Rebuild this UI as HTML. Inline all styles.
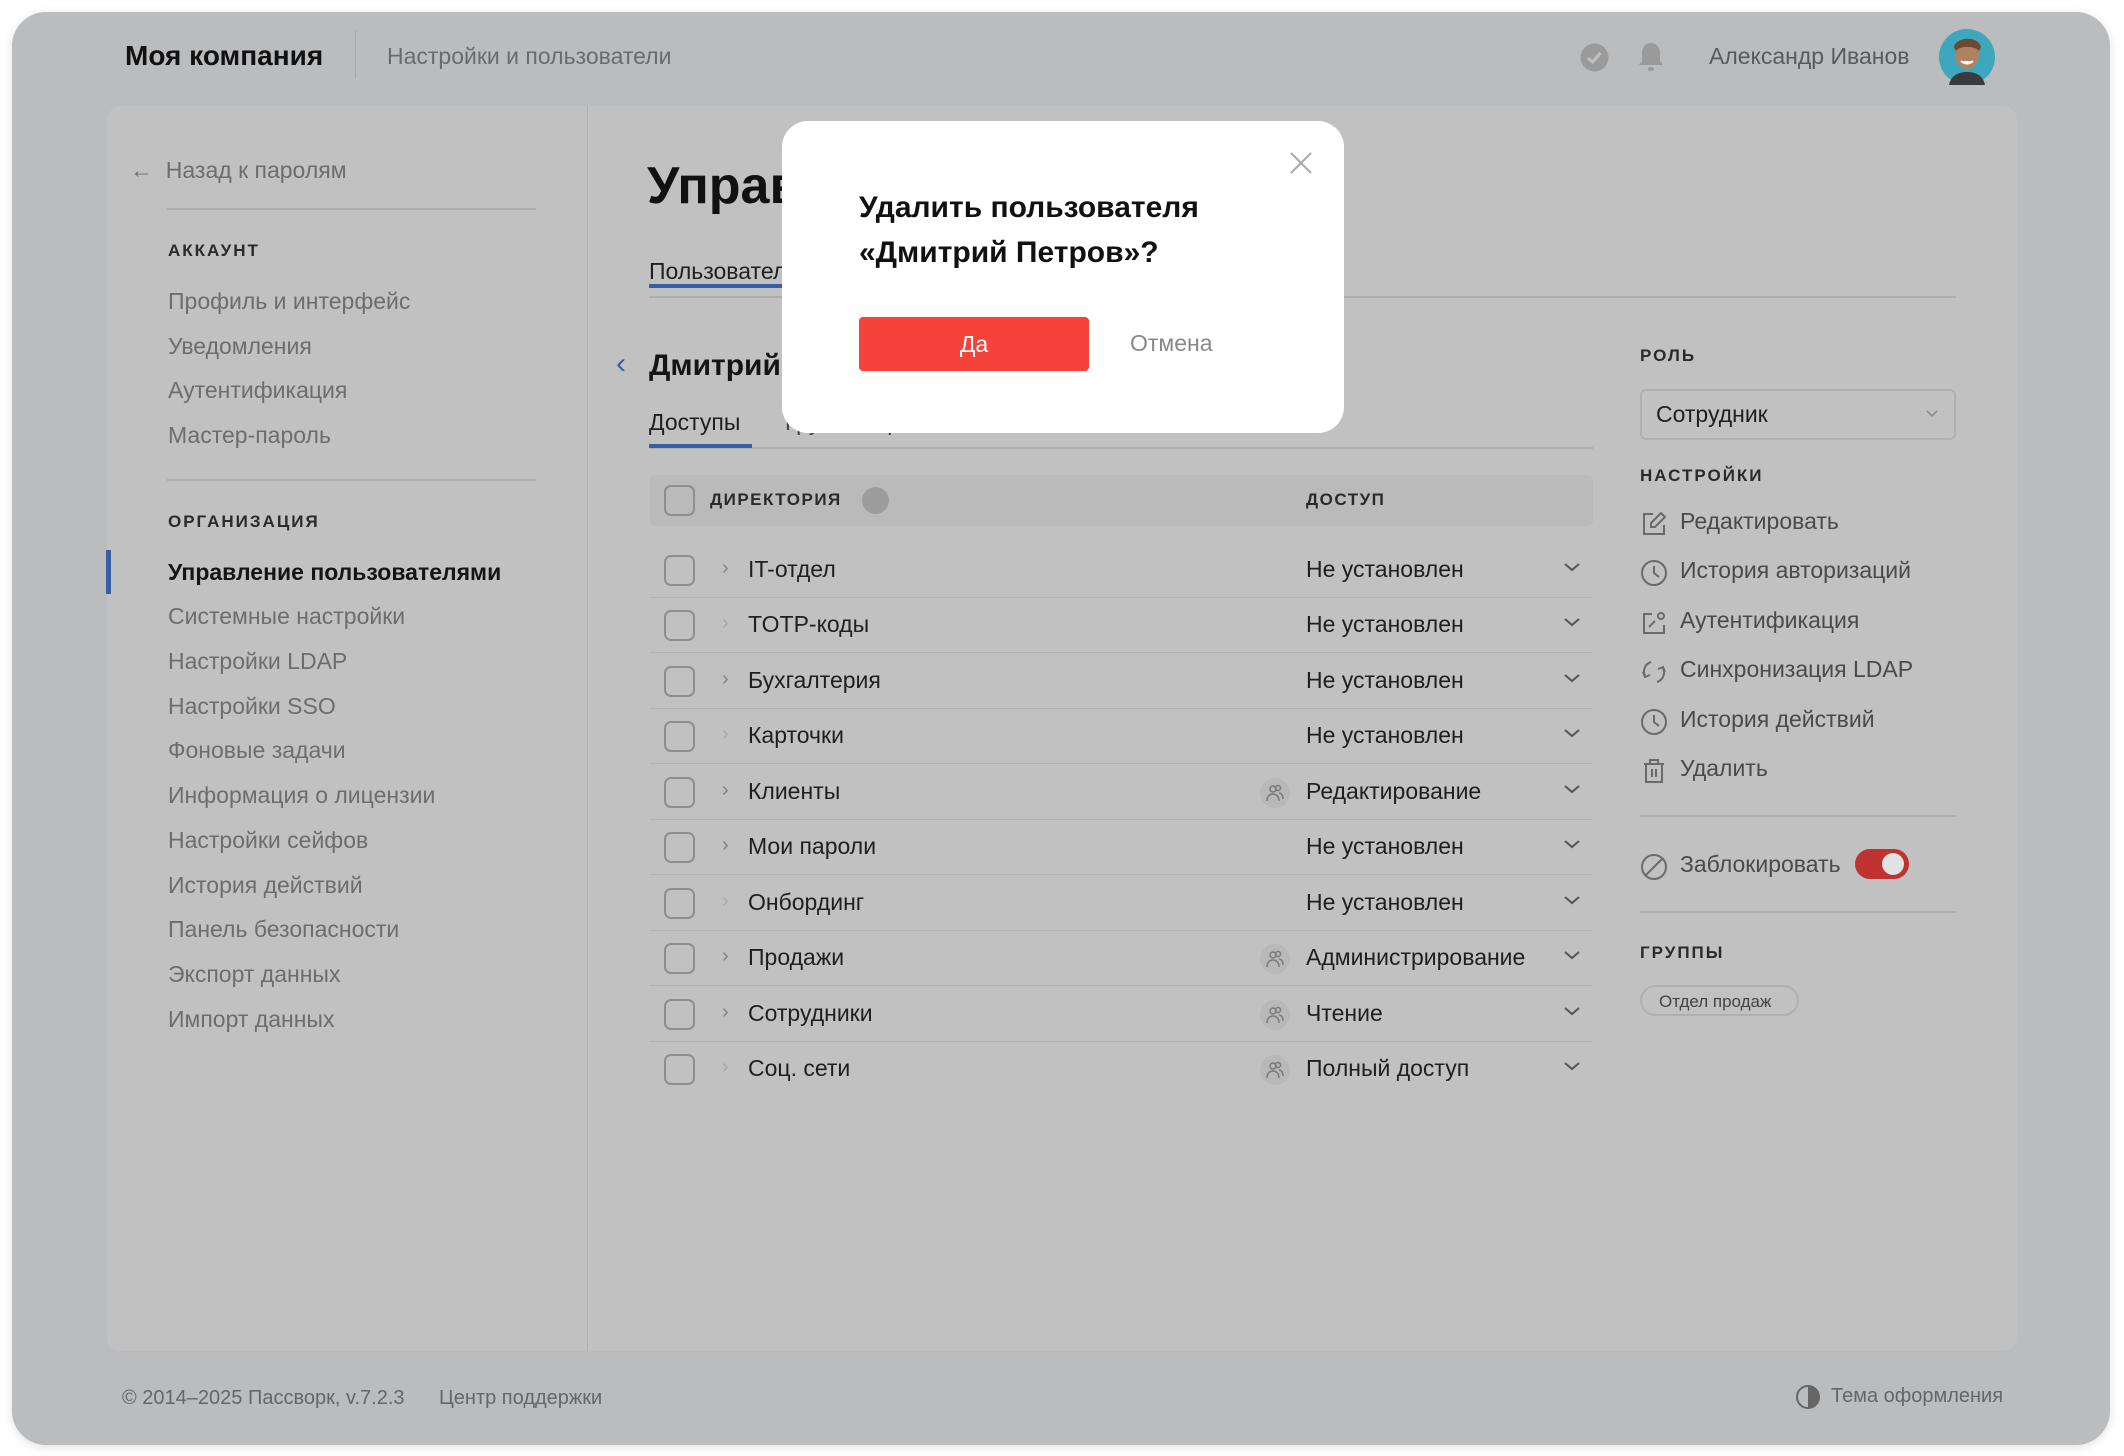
<!DOCTYPE html>
<html><head><meta charset="utf-8">
<style>
*{box-sizing:border-box;margin:0;padding:0}
body{width:2124px;height:1456px;background:#fff;font-family:"Liberation Sans","Noto Sans CJK SC",sans-serif;position:relative;overflow:hidden;color:#1c1c1c}
.a{position:absolute;white-space:nowrap}
#frame{position:absolute;left:12px;top:12px;width:2098px;height:1433px;background:#bbbcbe;border-radius:34px;box-shadow:0 2px 10px rgba(0,0,0,.12)}
#panel{position:absolute;left:107px;top:106px;width:1910px;height:1245px;background:#c1c1c1;border-radius:14px}
.g{color:#6b6b6b}
.side{font-size:23px;color:#6d6d6d}
.cap{font-size:17px;font-weight:bold;letter-spacing:2px;color:#2a2a2a}
.row{position:absolute;left:650px;width:943px;height:55px;border-bottom:1px solid #b3b3b3}
.cb{position:absolute;left:14px;top:12px;width:31px;height:31px;border:2px solid #8e8e8e;border-radius:7px}
.row .nm{position:absolute;left:98px;top:13px;font-size:23px;color:#1f1f1f;white-space:nowrap}
.row .ch{position:absolute;left:72px;top:14px;font-size:20px;color:#808080}
.row .ac{position:absolute;left:656px;top:13px;font-size:23px;color:#1f1f1f;white-space:nowrap}
.row .dd{position:absolute;left:912px;top:17px}
.row .gi{position:absolute;left:610px;top:13px;width:30px;height:30px;border-radius:50%;background:#b8b8b8}
.row .gi svg{position:absolute;left:6px;top:5px}
.ri{position:absolute;left:1640px;font-size:23px;color:#4a4a4a;white-space:nowrap}
.ri svg{position:absolute;left:0;top:2px}
.ri span{position:absolute;left:40px;top:0;white-space:nowrap}
</style></head><body>
<div id="frame"></div>
<div class="a" style="left:125px;top:40px;font-size:28px;font-weight:bold;color:#111">Моя компания</div>
<div class="a" style="left:355px;top:30px;width:1px;height:48px;background:#a9a9a9"></div>
<div class="a g" style="left:387px;top:43px;font-size:23px">Настройки и пользователи</div>
<svg class="a" style="left:1580px;top:43px" width="29" height="29" viewBox="0 0 29 29"><circle cx="14.5" cy="14.5" r="14" fill="#9a9a9a"/><path d="M8 15l4.5 4 8-9" stroke="#c0c0c0" stroke-width="3" fill="none"/></svg>
<svg class="a" style="left:1637px;top:41px" width="28" height="33" viewBox="0 0 28 33"><path d="M14 2c-6 0-9 5-9 10v8l-3 4h24l-3-4v-8c0-5-3-10-9-10z" fill="#9a9a9a"/><rect x="11" y="26" width="6" height="4" rx="2" fill="#9a9a9a"/></svg>
<div class="a" style="left:1709px;top:43px;font-size:23px;color:#5a5a5a">Александр Иванов</div>
<svg class="a" style="left:1939px;top:29px" width="56" height="56" viewBox="0 0 56 56"><circle cx="28" cy="28" r="28" fill="#3fa7bd"/><ellipse cx="28" cy="25" rx="12" ry="15" fill="#b08262"/><path d="M15 18c2-10 24-12 27 0l-2 4c-3-5-19-6-23 0z" fill="#6a4a30"/><path d="M10 56c2-10 10-13 18-13s16 3 18 13z" fill="#3b3b3b"/><path d="M22 32q6 5 12 0" stroke="#fff" stroke-width="2" fill="#fff"/></svg>

<div id="panel"></div>
<div class="a" style="left:587px;top:106px;width:1px;height:1245px;background:#b0b0b0"></div>

<!-- sidebar -->
<div class="a side" style="left:130px;top:157px">← &nbsp;Назад к паролям</div>
<div class="a" style="left:167px;top:208px;width:369px;height:2px;background:#adadad"></div>
<div class="a cap" style="left:168px;top:241px">АККАУНТ</div>
<div class="a side" style="left:168px;top:288px">Профиль и интерфейс</div>
<div class="a side" style="left:168px;top:333px">Уведомления</div>
<div class="a side" style="left:168px;top:377px">Аутентификация</div>
<div class="a side" style="left:168px;top:422px">Мастер-пароль</div>
<div class="a" style="left:167px;top:479px;width:369px;height:2px;background:#adadad"></div>
<div class="a cap" style="left:168px;top:512px">ОРГАНИЗАЦИЯ</div>
<div class="a" style="left:106px;top:550px;width:5px;height:44px;background:#3a5ea6"></div>
<div class="a" style="left:168px;top:559px;font-size:23px;font-weight:bold;color:#151515">Управление пользователями</div>
<div class="a side" style="left:168px;top:603px">Системные настройки</div>
<div class="a side" style="left:168px;top:648px">Настройки LDAP</div>
<div class="a side" style="left:168px;top:693px">Настройки SSO</div>
<div class="a side" style="left:168px;top:737px">Фоновые задачи</div>
<div class="a side" style="left:168px;top:782px">Информация о лицензии</div>
<div class="a side" style="left:168px;top:827px">Настройки сейфов</div>
<div class="a side" style="left:168px;top:872px">История действий</div>
<div class="a side" style="left:168px;top:916px">Панель безопасности</div>
<div class="a side" style="left:168px;top:961px">Экспорт данных</div>
<div class="a side" style="left:168px;top:1006px">Импорт данных</div>

<!-- main -->
<div class="a" style="left:647px;top:156px;font-size:52px;font-weight:bold;color:#111">Управление</div>
<div class="a" style="left:649px;top:258px;font-size:23px;color:#1f1f1f">Пользователи</div>
<div class="a" style="left:649px;top:296px;width:1307px;height:2px;background:#adadad"></div>
<div class="a" style="left:649px;top:284px;width:160px;height:4px;background:#3a5ea6"></div>
<div class="a" style="left:616px;top:347px;font-size:30px;color:#3a5ea6">‹</div>
<div class="a" style="left:649px;top:349px;font-size:30px;font-weight:bold;color:#151515">Дмитрий Петров</div>
<div class="a" style="left:649px;top:409px;font-size:23px;color:#1f1f1f">Доступы</div>
<div class="a" style="left:785px;top:409px;font-size:23px;color:#444">Группы и роли</div>
<div class="a" style="left:649px;top:447px;width:944px;height:2px;background:#adadad"></div>
<div class="a" style="left:649px;top:444px;width:103px;height:4px;background:#3a5ea6"></div>

<div class="a" style="left:650px;top:475px;width:943px;height:51px;background:#bababa;border-radius:6px"></div>
<div class="a" style="left:664px;top:485px;width:31px;height:31px;border:2px solid #8e8e8e;border-radius:7px"></div>
<div class="a cap" style="left:710px;top:490px;letter-spacing:1.5px">ДИРЕКТОРИЯ</div>
<div class="a" style="left:862px;top:487px;width:27px;height:27px;border-radius:50%;background:#9c9c9c"></div>
<div class="a cap" style="left:1306px;top:490px;letter-spacing:1.5px">ДОСТУП</div>

<div class="row" style="top:543px"><div class="cb"></div><div class="ch">›</div><div class="nm">IT-отдел</div><div class="ac">Не установлен</div><svg class="dd" width="20" height="14"><path d="M3 4l7 6 7-6" stroke="#555" stroke-width="2" fill="none"/></svg></div>
<div class="row" style="top:598px"><div class="cb"></div><div class="ch" style="color:#a8a8a8">›</div><div class="nm">TOTP-коды</div><div class="ac">Не установлен</div><svg class="dd" width="20" height="14"><path d="M3 4l7 6 7-6" stroke="#555" stroke-width="2" fill="none"/></svg></div>
<div class="row" style="top:654px"><div class="cb"></div><div class="ch">›</div><div class="nm">Бухгалтерия</div><div class="ac">Не установлен</div><svg class="dd" width="20" height="14"><path d="M3 4l7 6 7-6" stroke="#555" stroke-width="2" fill="none"/></svg></div>
<div class="row" style="top:709px"><div class="cb"></div><div class="ch" style="color:#a8a8a8">›</div><div class="nm">Карточки</div><div class="ac">Не установлен</div><svg class="dd" width="20" height="14"><path d="M3 4l7 6 7-6" stroke="#555" stroke-width="2" fill="none"/></svg></div>
<div class="row" style="top:765px"><div class="cb"></div><div class="ch">›</div><div class="nm">Клиенты</div><div class="gi"><svg width="18" height="20" viewBox="0 0 18 20" fill="none" stroke="#7a7a7a" stroke-width="1.5"><circle cx="7" cy="6" r="3"/><circle cx="12" cy="5" r="2.5"/><path d="M1 18c0-5 3-7 6-7s6 2 6 7M13 10c2 0 4 2 4 6"/></svg></div><div class="ac">Редактирование</div><svg class="dd" width="20" height="14"><path d="M3 4l7 6 7-6" stroke="#555" stroke-width="2" fill="none"/></svg></div>
<div class="row" style="top:820px"><div class="cb"></div><div class="ch">›</div><div class="nm">Мои пароли</div><div class="ac">Не установлен</div><svg class="dd" width="20" height="14"><path d="M3 4l7 6 7-6" stroke="#555" stroke-width="2" fill="none"/></svg></div>
<div class="row" style="top:876px"><div class="cb"></div><div class="ch" style="color:#a8a8a8">›</div><div class="nm">Онбординг</div><div class="ac">Не установлен</div><svg class="dd" width="20" height="14"><path d="M3 4l7 6 7-6" stroke="#555" stroke-width="2" fill="none"/></svg></div>
<div class="row" style="top:931px"><div class="cb"></div><div class="ch">›</div><div class="nm">Продажи</div><div class="gi"><svg width="18" height="20" viewBox="0 0 18 20" fill="none" stroke="#7a7a7a" stroke-width="1.5"><circle cx="7" cy="6" r="3"/><circle cx="12" cy="5" r="2.5"/><path d="M1 18c0-5 3-7 6-7s6 2 6 7M13 10c2 0 4 2 4 6"/></svg></div><div class="ac">Администрирование</div><svg class="dd" width="20" height="14"><path d="M3 4l7 6 7-6" stroke="#555" stroke-width="2" fill="none"/></svg></div>
<div class="row" style="top:987px"><div class="cb"></div><div class="ch">›</div><div class="nm">Сотрудники</div><div class="gi"><svg width="18" height="20" viewBox="0 0 18 20" fill="none" stroke="#7a7a7a" stroke-width="1.5"><circle cx="7" cy="6" r="3"/><circle cx="12" cy="5" r="2.5"/><path d="M1 18c0-5 3-7 6-7s6 2 6 7M13 10c2 0 4 2 4 6"/></svg></div><div class="ac">Чтение</div><svg class="dd" width="20" height="14"><path d="M3 4l7 6 7-6" stroke="#555" stroke-width="2" fill="none"/></svg></div>
<div class="row" style="top:1042px;border-bottom:none"><div class="cb"></div><div class="ch" style="color:#a8a8a8">›</div><div class="nm">Соц. сети</div><div class="gi"><svg width="18" height="20" viewBox="0 0 18 20" fill="none" stroke="#7a7a7a" stroke-width="1.5"><circle cx="7" cy="6" r="3"/><circle cx="12" cy="5" r="2.5"/><path d="M1 18c0-5 3-7 6-7s6 2 6 7M13 10c2 0 4 2 4 6"/></svg></div><div class="ac">Полный доступ</div><svg class="dd" width="20" height="14"><path d="M3 4l7 6 7-6" stroke="#555" stroke-width="2" fill="none"/></svg></div>

<!-- right panel -->
<div class="a cap" style="left:1640px;top:346px">РОЛЬ</div>
<div class="a" style="left:1640px;top:389px;width:316px;height:51px;border:2px solid #b0b0b0;border-radius:6px"></div>
<div class="a" style="left:1656px;top:401px;font-size:23px;color:#1f1f1f">Сотрудник</div>
<svg class="a" style="left:1924px;top:408px" width="16" height="12"><path d="M3 3l5 5 5-5" stroke="#888" stroke-width="1.5" fill="none"/></svg>
<div class="a cap" style="left:1640px;top:466px">НАСТРОЙКИ</div>
<div class="ri" style="top:508px"><svg width="28" height="28" viewBox="0 0 28 28" fill="none" stroke="#6a6a6a" stroke-width="2"><path d="M13 4H4v20h20v-9"/><path d="M21 3l4 4-10 10h-4v-4z"/></svg><span>Редактировать</span></div>
<div class="ri" style="top:557px"><svg width="28" height="28" viewBox="0 0 28 28" fill="none" stroke="#6a6a6a" stroke-width="2"><circle cx="14" cy="14" r="12"/><path d="M14 7v7l5 4"/></svg><span>История авторизаций</span></div>
<div class="ri" style="top:607px"><svg width="28" height="28" viewBox="0 0 28 28" fill="none" stroke="#6a6a6a" stroke-width="2"><path d="M12 5H4v19h20v-8"/><circle cx="21" cy="7" r="3"/><path d="M9 18l6-6"/></svg><span>Аутентификация</span></div>
<div class="ri" style="top:656px"><svg width="28" height="28" viewBox="0 0 28 28" fill="none" stroke="#6a6a6a" stroke-width="2"><path d="M5 18a10 10 0 0 1 6-14M23 10a10 10 0 0 1-6 14"/><path d="M3 14l2 5 5-2M25 14l-2-5-5 2"/></svg><span>Синхронизация LDAP</span></div>
<div class="ri" style="top:706px"><svg width="28" height="28" viewBox="0 0 28 28" fill="none" stroke="#6a6a6a" stroke-width="2"><circle cx="14" cy="14" r="12"/><path d="M14 7v7l5 4"/></svg><span>История действий</span></div>
<div class="ri" style="top:755px"><svg width="28" height="28" viewBox="0 0 28 28" fill="none" stroke="#6a6a6a" stroke-width="2"><path d="M4 7h20M10 7V3h8v4M6 7v18h16V7M12 12v8M16 12v8"/></svg><span>Удалить</span></div>
<div class="a" style="left:1640px;top:815px;width:316px;height:2px;background:#adadad"></div>
<div class="ri" style="top:851px"><svg width="28" height="28" viewBox="0 0 28 28" fill="none" stroke="#6a6a6a" stroke-width="2"><circle cx="14" cy="14" r="12"/><path d="M6 22L22 6"/></svg><span>Заблокировать</span></div>
<div class="a" style="left:1855px;top:849px;width:54px;height:30px;border-radius:15px;background:#c0322f"></div>
<div class="a" style="left:1882px;top:853px;width:22px;height:22px;border-radius:50%;background:#e2e2e2"></div>
<div class="a" style="left:1640px;top:911px;width:316px;height:2px;background:#adadad"></div>
<div class="a cap" style="left:1640px;top:943px">ГРУППЫ</div>
<div class="a" style="left:1640px;top:985px;width:159px;height:31px;border:2px solid #b0b0b0;border-radius:16px;font-size:17px;color:#444;padding:5px 0 0 17px">Отдел продаж</div>

<!-- footer -->
<div class="a" style="left:122px;top:1387px;font-size:20px;color:#666">© 2014–2025 Пассворк, v.7.2.3</div>
<div class="a" style="left:439px;top:1387px;font-size:20px;color:#666">Центр поддержки</div>
<svg class="a" style="left:1795px;top:1384px" width="26" height="26" viewBox="0 0 26 26"><circle cx="13" cy="13" r="11" fill="none" stroke="#666" stroke-width="2"/><path d="M13 2a11 11 0 0 1 0 22z" fill="#666"/></svg>
<div class="a" style="left:1831px;top:1385px;font-size:20px;color:#666">Тема оформления</div>

<!-- modal -->
<div class="a" style="left:782px;top:121px;width:562px;height:312px;background:#fff;border-radius:26px"></div>
<svg class="a" style="left:1289px;top:151px" width="24" height="24"><path d="M2 2l20 20M22 2L2 22" stroke="#aaa" stroke-width="2"/></svg>
<div class="a" style="left:859px;top:185px;font-size:30px;font-weight:bold;color:#111;line-height:45px">Удалить пользователя<br>«Дмитрий Петров»?</div>
<div class="a" style="left:859px;top:317px;width:230px;height:54px;background:#f5433b;border-radius:4px;color:#fff;font-size:23px;text-align:center;line-height:54px">Да</div>
<div class="a" style="left:1130px;top:330px;font-size:23px;color:#888">Отмена</div>
</body></html>
